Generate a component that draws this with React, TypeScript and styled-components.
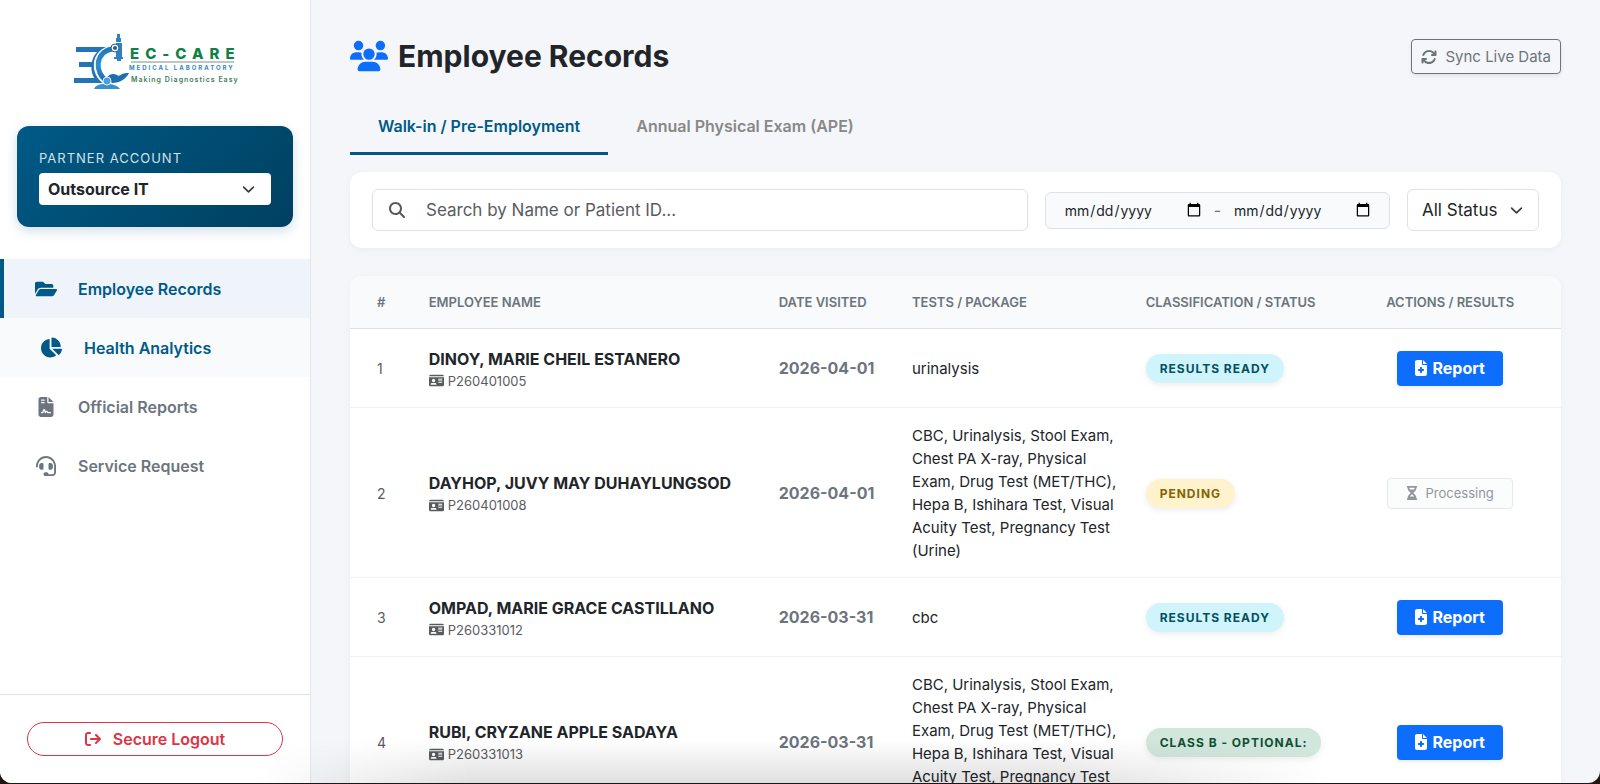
import React from "react";
import styled, { createGlobalStyle, css } from "styled-components";
import { FaFolderOpen, FaChartPie, FaHeadset } from "react-icons/fa";
import {
  FaFileContract,
  FaArrowRightFromBracket,
  FaArrowsRotate,
  FaMagnifyingGlass,
  FaIdCard,
  FaFileMedical,
  FaHourglassHalf,
  FaUsers,
} from "react-icons/fa6";

const font = `Inter, "Liberation Sans", sans-serif`;

const GlobalStyle = createGlobalStyle`
  *, *::before, *::after { box-sizing: border-box; }
  html, body { margin: 0; background: #1d1615; }
  body { font-family: ${font}; font-size: 16px; line-height: 24px; color: #212529; }
  button, input, select { font-family: inherit; color: inherit; margin: 0; }
`;

const Shell = styled.div`
  position: relative;
  display: flex;
  height: calc(100vh - 1px);
  overflow: hidden;
  background: #f4f6f9;
  border-radius: 0 0 12px 12px;
`;

const DockShade = styled.div`
  position: absolute;
  left: 16%;
  right: 17%;
  bottom: 0;
  height: 44px;
  pointer-events: none;
  background: linear-gradient(to bottom, rgba(0, 0, 0, 0), rgba(0, 0, 0, 0.12));
  mask-image: linear-gradient(to right, transparent, #000 20%, #000 75%, transparent);
`;

const Sidebar = styled.aside`
  display: flex;
  flex-direction: column;
  flex: 0 0 311px;
  background: #fff;
  border-right: 1px solid #e3e7eb;
`;

const Brand = styled.div`
  display: flex;
  justify-content: center;
  padding: 32px 0 28px;
`;

const PartnerCard = styled.section`
  margin: 0 17px 32px;
  padding: 22px;
  border-radius: 12px;
  background: linear-gradient(135deg, #005a87, #004060);
  box-shadow: 0 4px 12px rgba(0, 70, 110, 0.18);
`;

const PartnerLabel = styled.label`
  display: block;
  margin-bottom: 5px;
  font-size: 13px;
  line-height: 20px;
  letter-spacing: 1px;
  color: #d3e1ea;
`;

const SelectWrap = styled.div`
  position: relative;
  display: flex;
  align-items: center;

  svg {
    position: absolute;
    right: 16px;
    pointer-events: none;
  }
`;

const PartnerSelect = styled.select`
  appearance: none;
  width: 100%;
  height: 32px;
  padding: 0 9px;
  border: 0;
  border-radius: 4px;
  background: #fff;
  font-size: 16px;
  font-weight: 700;
`;

const NavList = styled.nav`
  display: flex;
  flex-direction: column;
  flex: 1;
`;

const NavLink = styled.a<{ $state?: "active" | "hover" }>`
  display: flex;
  align-items: center;
  gap: 20px;
  height: 59px;
  padding-left: 33px;
  border-left: 0 solid #005a87;
  font-size: 16px;
  font-weight: 600;
  color: #6c757d;
  text-decoration: none;

  ${({ $state }) =>
    $state === "active" &&
    css`
      padding-left: 29px;
      border-left-width: 4px;
      color: #005a87;
      background: #eef4f9;
    `}
  ${({ $state }) =>
    $state === "hover" &&
    css`
      padding-left: 39px;
      color: #005a87;
      background: #f8fafc;
    `}
`;

const NavIcon = styled.span`
  display: flex;
  justify-content: center;
  width: 25px;
`;

const SidebarFooter = styled.div`
  padding: 27px;
  border-top: 1px solid #dee2e6;
`;

const LogoutButton = styled.button`
  display: flex;
  align-items: center;
  justify-content: center;
  gap: 12px;
  width: 100%;
  height: 34px;
  border: 1px solid #dc3545;
  border-radius: 17px;
  background: #fff;
  color: #dc3545;
  font-size: 16px;
  font-weight: 600;
`;

const Main = styled.main`
  flex: 1;
  min-width: 0;
  padding: 39px 39px 0;
`;

const PageHeader = styled.header`
  display: flex;
  align-items: flex-start;
  justify-content: space-between;
`;

const PageTitle = styled.h1`
  display: flex;
  align-items: center;
  gap: 10px;
  height: 34px;
  margin: 0;
  font-size: 30px;
  line-height: 34px;
  font-weight: 700;
`;

const SyncButton = styled.button`
  display: flex;
  align-items: center;
  gap: 8px;
  height: 35px;
  padding: 0 9px;
  border: 1px solid #6c757d;
  border-radius: 4px;
  background: transparent;
  box-shadow: 0 2px 4px rgba(0, 0, 0, 0.08);
  color: #6c757d;
  font-size: 15px;
`;

const Tabs = styled.div`
  display: flex;
  margin: 27px 0 17px;
`;

const Tab = styled.button<{ $active?: boolean }>`
  height: 54px;
  padding: 0 28px 1px;
  border: 0;
  border-bottom: 3px solid ${({ $active }) => ($active ? "#005a87" : "transparent")};
  background: none;
  color: ${({ $active }) => ($active ? "#005a87" : "#888")};
  font-size: 16px;
  font-weight: 600;
`;

const FilterCard = styled.form`
  display: flex;
  align-items: center;
  gap: 17px;
  padding: 17px 22px;
  border-radius: 12px;
  background: #fff;
  box-shadow: 0 2px 8px rgba(0, 0, 0, 0.04);
`;

const SearchBox = styled.label`
  display: flex;
  align-items: center;
  flex: 1;
  gap: 21px;
  height: 42px;
  padding: 0 16px;
  border: 1px solid #dee2e6;
  border-radius: 6px;
  color: #55595d;
`;

const SearchInput = styled.input`
  flex: 1;
  min-width: 0;
  padding: 0;
  border: 0;
  outline: 0;
  background: none;
  font-size: 17px;

  &::placeholder {
    color: #595c5f;
    opacity: 1;
  }
`;

const DateRange = styled.div`
  display: flex;
  align-items: center;
  gap: 12px;
  height: 37px;
  padding: 0 18px;
  border: 1px solid #dee2e6;
  border-radius: 6px;
  background: #f8fafb;
  color: #6c757d;
`;

const DateInput = styled.input`
  width: 138px;
  padding: 0;
  border: 0;
  background: none;
  font-size: 14px;
  color: #212529;

  &::-webkit-calendar-picker-indicator {
    width: 16px;
    height: 16px;
    padding: 0;
  }
`;

const StatusSelect = styled.select`
  appearance: none;
  width: 132px;
  height: 42px;
  padding: 0 14px;
  border: 1px solid #dee2e6;
  border-radius: 6px;
  background: #fff;
  font-size: 17px;
`;

const TableCard = styled.div`
  margin-top: 28px;
  border-radius: 12px 12px 0 0;
  background: #fff;
  box-shadow: 0 2px 8px rgba(0, 0, 0, 0.04);
`;

const Records = styled.table`
  width: 100%;
  table-layout: fixed;
  border-collapse: separate;
  border-spacing: 0;
`;

const Col = styled.col<{ $share: string }>`
  width: ${({ $share }) => $share};
`;

const HeadCell = styled.th<{ $center?: boolean }>`
  height: 53px;
  padding: 0 8px 0 ${({ $center }) => ($center ? "8px" : "17px")};
  border-bottom: 1px solid #dee2e6;
  background: #f8fafb;
  color: #6c757d;
  font-size: 13px;
  font-weight: 600;
  text-align: ${({ $center }) => ($center ? "center" : "left")};
  white-space: nowrap;

  &:first-child { padding-left: 27px; padding-right: 0; border-top-left-radius: 12px; }
  &:last-child { border-top-right-radius: 12px; }
`;

const Cell = styled.td<{ $center?: boolean }>`
  height: 79px;
  padding: 16px 8px 15px ${({ $center }) => ($center ? "8px" : "17px")};
  border-bottom: 1px solid #eff1f4;
  font-size: 15px;
  line-height: 23px;
  vertical-align: middle;
  text-align: ${({ $center }) => ($center ? "center" : "left")};
`;

const NumberCell = styled(Cell)`
  padding-left: 27px;
  padding-right: 0;
  font-size: 14px;
  color: #595c5f;
`;

const DateCell = styled(Cell)`
  font-size: 16px;
  font-weight: 700;
  color: #6c757d;
  white-space: nowrap;
`;

const EmployeeName = styled.div`
  font-size: 16px;
  line-height: 24px;
  font-weight: 700;
  white-space: nowrap;
`;

const PatientId = styled.div`
  display: flex;
  align-items: center;
  gap: 4px;
  font-size: 13px;
  line-height: 20px;
  color: #595c5f;
`;

const tones = {
  ready: { bg: "#cff4fc", fg: "#055160" },
  pending: { bg: "#fff3cd", fg: "#856404" },
  classB: { bg: "#d1e7dd", fg: "#0f5132" },
};

const Badge = styled.span<{ $tone: keyof typeof tones }>`
  display: inline-block;
  height: 29px;
  padding: 0 14px;
  border-radius: 15px;
  background: ${({ $tone }) => tones[$tone].bg};
  color: ${({ $tone }) => tones[$tone].fg};
  box-shadow: 0 2px 6px rgba(0, 0, 0, 0.08);
  font-size: 12px;
  line-height: 30px;
  font-weight: 700;
  letter-spacing: 1px;
  white-space: nowrap;
  vertical-align: middle;
`;

const ReportButton = styled.button`
  display: inline-flex;
  align-items: center;
  justify-content: center;
  gap: 3px;
  width: 106px;
  height: 35px;
  padding: 0 2px 1px 0;
  border: 0;
  border-radius: 4px;
  background: #0d6efd;
  color: #fff;
  box-shadow: 0 2px 4px rgba(0, 0, 0, 0.08);
  font-size: 16px;
  font-weight: 700;
  vertical-align: middle;
`;

const ProcessingButton = styled.button`
  display: inline-flex;
  align-items: center;
  justify-content: center;
  gap: 7px;
  width: 126px;
  height: 31px;
  padding: 0 2px 0 0;
  border: 1px solid #e6e9ec;
  border-radius: 4px;
  background: #fbfcfc;
  color: #92979c;
  font-size: 13px;
  vertical-align: middle;
`;

const Chevron = () => (
  <svg width="13" height="13" viewBox="0 0 16 16" fill="none" stroke="#343a40" strokeWidth="2" strokeLinecap="round" strokeLinejoin="round" aria-hidden>
    <path d="m2 5 6 6 6-6" />
  </svg>
);

const Logo = () => (
  <svg width="170" height="66" viewBox="0 0 170 66" role="img" aria-label="EC-Care Medical Laboratory">
    <defs>
      <linearGradient id="steel" x1="0" y1="0" x2="0" y2="1">
        <stop offset="0" stopColor="#1f78bd" />
        <stop offset="0.5" stopColor="#2f8ed2" />
        <stop offset="1" stopColor="#1d6cad" />
      </linearGradient>
    </defs>
    <g fill="#2274b5">
      <path d="M6 15h29l-7 5H6z" />
      <path d="M9 30h15v5H9z" />
      <path d="M4 46h22l7 5H4z" />
      <path d="M35 15C20 20 17 40 28 51h6C24 40 25 22 37 16z" />
    </g>
    <path d="M42 17C24 20 23 41 36 49" fill="none" stroke="#fff" strokeWidth="7" />
    <path d="M42 17C25 20 24 41 37 49" fill="none" stroke="url(#steel)" strokeWidth="5" />
    <path d="M37 46c2-4 6-5 10-3 1 1 3 1 5-1 2-1 4-1 7-1-3 6-9 10-17 10z" fill="#1f6fae" />
    <path d="M24 57c1-3 4-5 12-5s12 2 14 5z" fill="#3a8fcf" />
    <circle cx="37" cy="49" r="4" fill="#4a9edb" stroke="#e6f3fb" strokeWidth="1" />
    <path d="M47 2h3v4h-3zM46 6h5v4h-5zM46 11h6v14h-6zM44 25h9v2h-9zM47 27h4v2h-4z" fill="#2b83c4" />
    <circle cx="45" cy="16" r="4" fill="#fff" stroke="#245c91" strokeWidth="1" />
    <circle cx="45" cy="16" r="2" fill="#245c91" />
    <text x="60" y="27" fontFamily={font} fontSize="15" fontWeight="800" letterSpacing="6" fill="#0f8147">EC-CARE</text>
    <path d="M61 30h103" stroke="#7f8f88" strokeWidth="1" />
    <text x="59" y="38" fontFamily={font} fontSize="6" fontWeight="700" letterSpacing="2" fill="#3687c0">MEDICAL LABORATORY</text>
    <text x="61" y="50" fontFamily={font} fontSize="7" fontWeight="600" letterSpacing="1" fill="#3c7f5c">Making Diagnostics Easy</text>
  </svg>
);

const fullPackage =
  "CBC, Urinalysis, Stool Exam, Chest PA X-ray, Physical Exam, Drug Test (MET/THC), Hepa B, Ishihara Test, Visual Acuity Test, Pregnancy Test (Urine)";

type Row = {
  name: string;
  id: string;
  date: string;
  tests: string;
  tone: keyof typeof tones;
  status: string;
  done: boolean;
};

const rows: Row[] = [
  { name: "DINOY, MARIE CHEIL ESTANERO", id: "P260401005", date: "2026-04-01", tests: "urinalysis", tone: "ready", status: "RESULTS READY", done: true },
  { name: "DAYHOP, JUVY MAY DUHAYLUNGSOD", id: "P260401008", date: "2026-04-01", tests: fullPackage, tone: "pending", status: "PENDING", done: false },
  { name: "OMPAD, MARIE GRACE CASTILLANO", id: "P260331012", date: "2026-03-31", tests: "cbc", tone: "ready", status: "RESULTS READY", done: true },
  { name: "RUBI, CRYZANE APPLE SADAYA", id: "P260331013", date: "2026-03-31", tests: fullPackage, tone: "classB", status: "CLASS B - OPTIONAL:", done: true },
];

export default function App() {
  return (
    <>
      <GlobalStyle />
      <Shell>
        <Sidebar>
          <Brand>
            <Logo />
          </Brand>
          <PartnerCard>
            <PartnerLabel htmlFor="partner">PARTNER ACCOUNT</PartnerLabel>
            <SelectWrap>
              <PartnerSelect id="partner">
                <option>Outsource IT</option>
              </PartnerSelect>
              <Chevron />
            </SelectWrap>
          </PartnerCard>
          <NavList>
            <NavLink href="#records" $state="active">
              <NavIcon><FaFolderOpen size={22} /></NavIcon>
              Employee Records
            </NavLink>
            <NavLink href="#analytics" $state="hover">
              <NavIcon><FaChartPie size={21} /></NavIcon>
              Health Analytics
            </NavLink>
            <NavLink href="#reports">
              <NavIcon><FaFileContract size={20} /></NavIcon>
              Official Reports
            </NavLink>
            <NavLink href="#service">
              <NavIcon><FaHeadset size={20} /></NavIcon>
              Service Request
            </NavLink>
          </NavList>
          <SidebarFooter>
            <LogoutButton type="button">
              <FaArrowRightFromBracket size={16} />
              Secure Logout
            </LogoutButton>
          </SidebarFooter>
        </Sidebar>

        <Main>
          <PageHeader>
            <PageTitle>
              <FaUsers size={38} color="#0d6efd" />
              Employee Records
            </PageTitle>
            <SyncButton type="button">
              <FaArrowsRotate size={16} />
              Sync Live Data
            </SyncButton>
          </PageHeader>

          <Tabs role="tablist">
            <Tab type="button" role="tab" aria-selected="true" $active>Walk-in / Pre-Employment</Tab>
            <Tab type="button" role="tab" aria-selected="false">Annual Physical Exam (APE)</Tab>
          </Tabs>

          <FilterCard>
            <SearchBox>
              <FaMagnifyingGlass size={16} aria-hidden />
              <SearchInput type="text" aria-label="Search" placeholder="Search by Name or Patient ID..." />
            </SearchBox>
            <DateRange>
              <DateInput type="date" aria-label="From date" />
              -
              <DateInput type="date" aria-label="To date" />
            </DateRange>
            <SelectWrap>
              <StatusSelect aria-label="Status">
                <option>All Status</option>
              </StatusSelect>
              <Chevron />
            </SelectWrap>
          </FilterCard>

          <TableCard>
            <Records>
              <colgroup>
                <Col $share="5.1%" />
                <Col $share="28.9%" />
                <Col $share="11%" />
                <Col $share="19.3%" />
                <Col $share="17.4%" />
                <Col $share="18.3%" />
              </colgroup>
              <thead>
                <tr>
                  <HeadCell>#</HeadCell>
                  <HeadCell>EMPLOYEE NAME</HeadCell>
                  <HeadCell>DATE VISITED</HeadCell>
                  <HeadCell>TESTS / PACKAGE</HeadCell>
                  <HeadCell>CLASSIFICATION / STATUS</HeadCell>
                  <HeadCell $center>ACTIONS / RESULTS</HeadCell>
                </tr>
              </thead>
              <tbody>
                {rows.map((row, i) => (
                  <tr key={row.id}>
                    <NumberCell>{i + 1}</NumberCell>
                    <Cell>
                      <EmployeeName>{row.name}</EmployeeName>
                      <PatientId>
                        <FaIdCard size={15} aria-hidden />
                        {row.id}
                      </PatientId>
                    </Cell>
                    <DateCell>{row.date}</DateCell>
                    <Cell>{row.tests}</Cell>
                    <Cell><Badge $tone={row.tone}>{row.status}</Badge></Cell>
                    <Cell $center>
                      {row.done ? (
                        <ReportButton type="button">
                          <FaFileMedical size={16} />
                          Report
                        </ReportButton>
                      ) : (
                        <ProcessingButton type="button" disabled>
                          <FaHourglassHalf size={14} />
                          Processing
                        </ProcessingButton>
                      )}
                    </Cell>
                  </tr>
                ))}
              </tbody>
            </Records>
          </TableCard>
        </Main>
        <DockShade />
      </Shell>
    </>
  );
}
